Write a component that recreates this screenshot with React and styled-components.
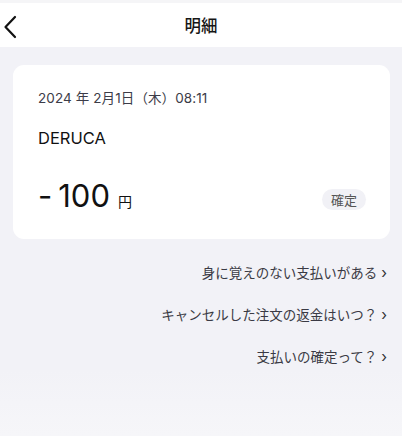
import React from 'react';
import styled, { createGlobalStyle } from 'styled-components';

const GlobalStyle = createGlobalStyle`
  body {
    margin: 0;
    background: #f2f2f7;
    font-family: "Inter", "Noto Sans CJK JP", sans-serif;
    color: #111;
  }
`;

const links = [
  '身に覚えのない支払いがある',
  'キャンセルした注文の返金はいつ？',
  '支払いの確定って？',
];

export default function App() {
  return (
    <Page.Wrapper>
      <GlobalStyle />
      <Header.Wrapper>
        <Header.Back aria-label="戻る">
          <svg width="14" height="24" viewBox="0 0 14 24" fill="none">
            <path d="M12 2L2.5 12L12 22" stroke="#111" strokeWidth="2.2" strokeLinecap="round" strokeLinejoin="round" />
          </svg>
        </Header.Back>
        <Header.Title>明細</Header.Title>
      </Header.Wrapper>
      <Page.Body>
        <Card.Wrapper>
          <Card.Date>2024 年 2月1日（木）08:11</Card.Date>
          <Card.Merchant>DERUCA</Card.Merchant>
          <Card.Row>
            <Card.Amount>
              <Card.Sign>-</Card.Sign>100<Card.Yen>円</Card.Yen>
            </Card.Amount>
            <Card.Badge>確定</Card.Badge>
          </Card.Row>
        </Card.Wrapper>
        <Help.List>
          {links.map((t) => (
            <Help.Item key={t}>
              {t}
              <Help.Chevron>›</Help.Chevron>
            </Help.Item>
          ))}
        </Help.List>
      </Page.Body>
    </Page.Wrapper>
  );
}

const Page = {
  Wrapper: styled.div`
    min-height: 436px;
    background: linear-gradient(#f2f2f7 85%, #f6f6f9);
  `,
  Body: styled.main`
    padding: 18px 12px 0 13px;
  `,
};

const Header = {
  Wrapper: styled.header`
    position: relative;
    height: 44px;
    border-top: 3px solid #f5f5f7;
    background: #fff;
    display: flex;
    align-items: center;
    justify-content: center;
  `,
  Back: styled.button`
    position: absolute;
    left: 3px;
    top: 12px;
    padding: 0;
    border: 0;
    background: none;
    display: flex;
  `,
  Title: styled.h1`
    margin: 0;
    font-size: 16.5px;
    font-weight: 500;
    color: #161616;
  `,
};

const Card = {
  Wrapper: styled.section`
    height: 174px;
    box-sizing: border-box;
    background: #fff;
    border-radius: 11px;
    padding: 24px 25px 0 25px;
    display: flex;
    flex-direction: column;
  `,
  Date: styled.div`
    font-size: 13.5px;
    color: #3c3c48;
    line-height: 18px;
    letter-spacing: 0.1px;
  `,
  Merchant: styled.div`
    margin-top: 21px;
    font-size: 16.5px;
    line-height: 20px;
    color: #111;
  `,
  Row: styled.div`
    margin-top: 28px;
    display: flex;
    align-items: center;
    justify-content: space-between;
  `,
  Amount: styled.div`
    font-size: 31px;
    font-weight: 400;
    line-height: 40px;
    color: #111;
    display: flex;
    align-items: baseline;
  `,
  Sign: styled.span`
    margin-right: 6px;
  `,
  Yen: styled.span`
    font-size: 14px;
    font-weight: 400;
    margin-left: 8px;
  `,
  Badge: styled.span`
    margin-right: -1px;
    width: 44px;
    height: 21px;
    border-radius: 11px;
    background: #f1f1f6;
    color: #555;
    font-size: 13px;
    display: flex;
    align-items: center;
    justify-content: center;
  `,
};

const Help = {
  List: styled.ul`
    list-style: none;
    margin: 24px 0 0 0;
    padding: 0 3px 0 0;
    display: flex;
    flex-direction: column;
    align-items: flex-end;
    gap: 22px;
  `,
  Item: styled.li`
    font-size: 13.5px;
    line-height: 20px;
    color: #3a3a44;
    display: flex;
    align-items: center;
  `,
  Chevron: styled.span`
    margin-left: 4px;
    font-size: 15px;
    color: #333;
  `,
};
